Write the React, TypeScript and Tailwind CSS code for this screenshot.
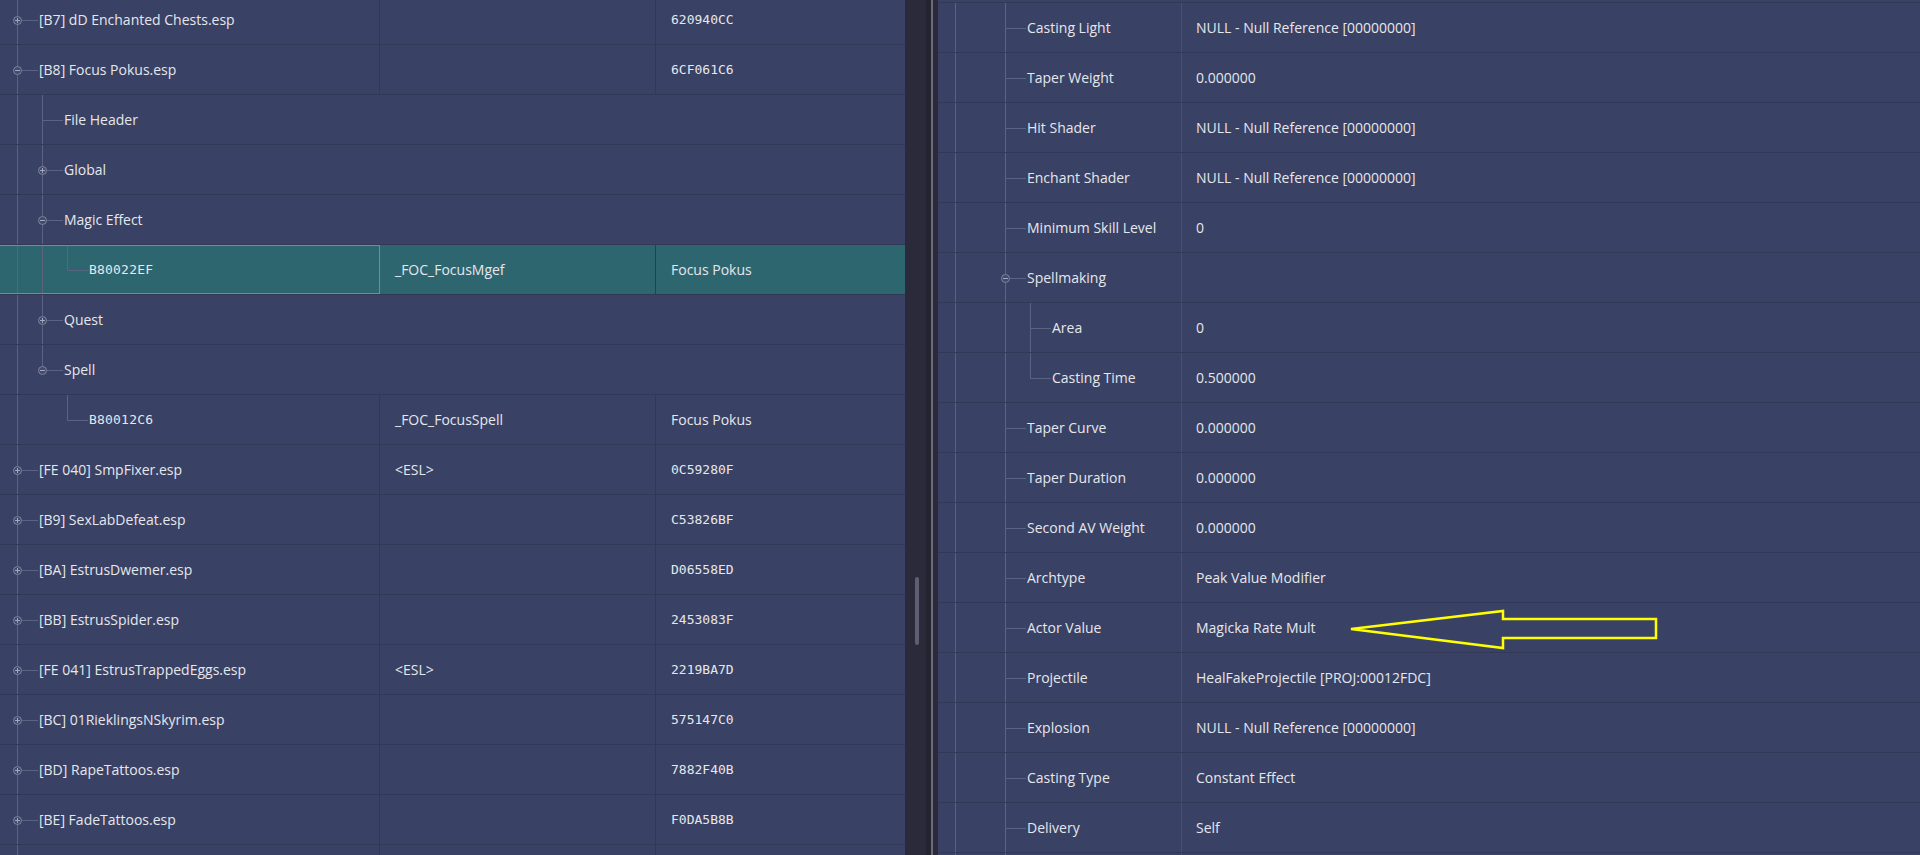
type Guide = "full" | "none";

interface TreeRow {
  label: string;
  col2?: string;
  col3?: string;
  guides: Guide[];
  conn: "full" | "end";
  icon?: "plus" | "minus";
  mono?: boolean;
  col3Mono?: boolean;
  group?: boolean;
  selected?: boolean;
}

interface FieldRow {
  label: string;
  value: string;
  guides: Guide[];
  conn: "full" | "end";
  icon?: "plus" | "minus";
}

const plugin = (label: string, formId: string, col2?: string): TreeRow => ({
  label,
  col2,
  col3: formId,
  col3Mono: true,
  guides: [],
  conn: "full",
  icon: "plus",
});

const leftRows: TreeRow[] = [
  plugin("[B7] dD Enchanted Chests.esp", "620940CC"),
  { ...plugin("[B8] Focus Pokus.esp", "6CF061C6"), icon: "minus" },
  { label: "File Header", guides: ["full"], conn: "full", group: true },
  { label: "Global", guides: ["full"], conn: "full", icon: "plus", group: true },
  { label: "Magic Effect", guides: ["full"], conn: "full", icon: "minus", group: true },
  {
    label: "B80022EF",
    col2: "_FOC_FocusMgef",
    col3: "Focus Pokus",
    guides: ["full", "full"],
    conn: "end",
    mono: true,
    selected: true,
  },
  { label: "Quest", guides: ["full"], conn: "full", icon: "plus", group: true },
  { label: "Spell", guides: ["full"], conn: "end", icon: "minus", group: true },
  {
    label: "B80012C6",
    col2: "_FOC_FocusSpell",
    col3: "Focus Pokus",
    guides: ["full", "none"],
    conn: "end",
    mono: true,
  },
  plugin("[FE 040] SmpFixer.esp", "0C59280F", "<ESL>"),
  plugin("[B9] SexLabDefeat.esp", "C53826BF"),
  plugin("[BA] EstrusDwemer.esp", "D06558ED"),
  plugin("[BB] EstrusSpider.esp", "2453083F"),
  plugin("[FE 041] EstrusTrappedEggs.esp", "2219BA7D", "<ESL>"),
  plugin("[BC] 01RieklingsNSkyrim.esp", "575147C0"),
  plugin("[BD] RapeTattoos.esp", "7882F40B"),
  plugin("[BE] FadeTattoos.esp", "F0DA5B8B"),
  plugin("", ""),
];

const f = (label: string, value: string): FieldRow => ({
  label,
  value,
  guides: ["full", "none"],
  conn: "full",
});

const rightRows: FieldRow[] = [
  f("Casting Light", "NULL - Null Reference [00000000]"),
  f("Taper Weight", "0.000000"),
  f("Hit Shader", "NULL - Null Reference [00000000]"),
  f("Enchant Shader", "NULL - Null Reference [00000000]"),
  f("Minimum Skill Level", "0"),
  { ...f("Spellmaking", ""), icon: "minus" },
  { label: "Area", value: "0", guides: ["full", "none", "full"], conn: "full" },
  { label: "Casting Time", value: "0.500000", guides: ["full", "none", "full"], conn: "end" },
  f("Taper Curve", "0.000000"),
  f("Taper Duration", "0.000000"),
  f("Second AV Weight", "0.000000"),
  f("Archtype", "Peak Value Modifier"),
  f("Actor Value", "Magicka Rate Mult"),
  f("Projectile", "HealFakeProjectile [PROJ:00012FDC]"),
  f("Explosion", "NULL - Null Reference [00000000]"),
  f("Casting Type", "Constant Effect"),
  f("Delivery", "Self"),
  f("", ""),
];

function Guides({ guides, conn, icon }: { guides: Guide[]; conn: "full" | "end"; icon?: "plus" | "minus" }) {
  return (
    <>
      {guides.map((g, i) => (
        <div key={i} className="relative w-[25px] h-full shrink-0">
          {g === "full" && <div className="absolute left-[12px] top-0 bottom-0 w-px bg-[#5b6282]" />}
        </div>
      ))}
      <div className="relative w-[25px] h-full shrink-0">
        <div
          className={
            conn === "full"
              ? "absolute left-[12px] top-0 bottom-0 w-px bg-[#5b6282]"
              : "absolute left-[12px] top-0 h-1/2 w-px bg-[#5b6282]"
          }
        />
        <div className="absolute left-[12px] top-1/2 w-[21px] h-px bg-[#5b6282]" />
        {icon && (
          <div className="absolute left-[8px] top-[21px] w-[9px] h-[9px] rounded-full border border-[#7d83a0] bg-[#434a6e] flex items-center justify-center">
            <div className="relative w-[5px] h-px bg-[#a4a9c0]">
              {icon === "plus" && <div className="absolute left-[2px] -top-[2px] w-px h-[5px] bg-[#a4a9c0]" />}
            </div>
          </div>
        )}
      </div>
    </>
  );
}

function LeftRow({ row }: { row: TreeRow }) {
  const sel = row.selected;
  return (
    <div className={`flex h-[50px] border-b border-[#323856] ${sel ? "bg-[#2e6670]" : ""}`}>
      <div
        className={`flex items-center h-full ${row.group ? "flex-1" : "w-[380px] shrink-0"} ${
          sel ? "border border-[#6f8f96] border-l-0" : row.group ? "" : "border-r border-[#323856]"
        } pl-[5px]`}
      >
        <Guides guides={row.guides} conn={row.conn} icon={row.icon} />
        <span
          className={`ml-[9px] whitespace-nowrap ${
            row.mono ? "font-['DejaVu_Sans_Mono',monospace] text-[13px] tracking-[0.2px]" : ""
          }`}
        >
          {row.label}
        </span>
      </div>
      {!row.group && (
        <>
          <div className="w-[276px] shrink-0 flex items-center pl-[15px] border-r border-[#323856] whitespace-nowrap">
            {row.col2}
          </div>
          <div
            className={`flex-1 flex items-center pl-[15px] whitespace-nowrap ${
              row.col3Mono ? "font-['DejaVu_Sans_Mono',monospace] text-[13px]" : ""
            }`}
          >
            {row.col3}
          </div>
        </>
      )}
    </div>
  );
}

function RightRow({ row }: { row: FieldRow }) {
  return (
    <div className="flex h-[50px] border-b border-[#323856]">
      <div className="w-[244px] shrink-0 flex items-center h-full pl-[5px] border-r border-[#4a506f]">
        <Guides guides={row.guides} conn={row.conn} icon={row.icon} />
        <span className="ml-[9px] whitespace-nowrap">{row.label}</span>
      </div>
      <div className="flex-1 flex items-center pl-[14px] whitespace-nowrap">{row.value}</div>
    </div>
  );
}

export default function App() {
  return (
    <div className="relative flex w-[1920px] h-[855px] overflow-hidden bg-[#394164] text-[#e6e7ec] text-[14px] font-['Open_Sans',sans-serif]">
      <div className="w-[905px] shrink-0 h-full overflow-hidden">
        <div className="-mt-[5px]">
          {leftRows.map((r, i) => (
            <LeftRow key={i} row={r} />
          ))}
        </div>
      </div>

      {/* scrollbar gutter + splitter */}
      <div className="w-[21px] shrink-0 h-full bg-[#2b2a3a] flex justify-center">
        <div className="mt-[577px] w-[4px] h-[68px] rounded-full bg-[#5f5e70] ml-[2px]" />
      </div>
      <div className="w-[5px] shrink-0 h-full bg-[#242330]" />
      <div className="w-[2px] shrink-0 h-full bg-[#6b6b7b]" />
      <div className="w-[5px] shrink-0 h-full bg-[#2b2a3a]" />

      <div className="flex-1 h-full overflow-hidden">
        <div className="h-[3px] border-b border-[#323856]" />
        {rightRows.map((r, i) => (
          <RightRow key={i} row={r} />
        ))}
      </div>

      {/* yellow annotation arrow */}
      <svg
        className="absolute left-[1340px] top-[600px] pointer-events-none"
        width="330"
        height="60"
        viewBox="0 0 330 60"
      >
        <polygon
          points="11,29 163,11 163,19 316,19 316,38 163,38 163,48"
          fill="none"
          stroke="#ffff00"
          strokeWidth="2.5"
          strokeLinejoin="miter"
        />
      </svg>
    </div>
  );
}
